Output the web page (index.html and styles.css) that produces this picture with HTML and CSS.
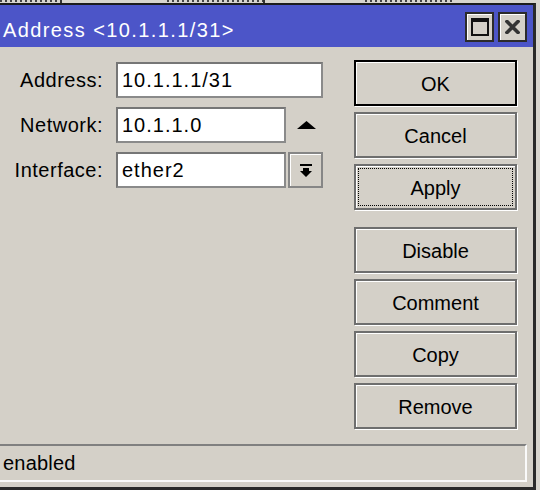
FILE: index.html
```html
<!DOCTYPE html>
<html>
<head>
<meta charset="utf-8">
<title>Address</title>
<link rel="stylesheet" href="styles.css">
</head>
<body>
<div class="backdrop">
  <span class="frag frag-a"></span><span class="sep"></span>
  <span class="frag frag-b"></span><span class="sep"></span>
  <span class="frag frag-c"></span>
</div>
<div class="window">
  <div class="titlebar">
    <span class="title">Address &lt;10.1.1.1/31&gt;</span>
    <div class="tb-buttons">
      <div class="tb-btn">
        <svg width="18" height="18" viewBox="0 0 18 18"><path d="M0 0H18V18H0Z M2 4V16H16V4Z" fill="#111" fill-rule="evenodd"/></svg>
      </div>
      <div class="tb-btn">
        <svg width="15" height="14" viewBox="0 0 15 14"><path d="M2 1.5L13 12.5M13 1.5L2 12.5" stroke="#333" stroke-width="3.6" stroke-linecap="square"/></svg>
      </div>
    </div>
  </div>
  <div class="content">
    <div class="form">
      <div class="lbl">Address:</div>
      <div class="field wide">10.1.1.1/31</div>
      <div class="lbl">Network:</div>
      <div class="field">10.1.1.0</div>
      <div class="extra">
        <svg width="19" height="8" viewBox="0 0 19 8"><path d="M9.5 0L19 8H0Z" fill="#000"/></svg>
      </div>
      <div class="lbl">Interface:</div>
      <div class="field">ether2</div>
      <div class="extra dd">
        <svg width="12" height="14" viewBox="0 0 12 14"><rect x="0" y="0" width="12" height="2" fill="#000"/><path d="M3 4H9V7H12L6 13L0 7H3Z" fill="#000"/></svg>
      </div>
    </div>
    <div class="actions">
      <div class="group">
        <div class="btn btn-default">OK</div>
        <div class="btn">Cancel</div>
        <div class="btn btn-focus">Apply</div>
      </div>
      <div class="group">
        <div class="btn">Disable</div>
        <div class="btn">Comment</div>
        <div class="btn">Copy</div>
        <div class="btn">Remove</div>
      </div>
    </div>
  </div>
  <div class="status">enabled</div>
</div>
</body>
</html>
```
FILE: styles.css
```css
html, body {
  margin: 0;
  padding: 0;
}
body {
  width: 540px;
  height: 490px;
  overflow: hidden;
  background: #d8d5ce;
  font-family: "Liberation Sans", Arial, sans-serif;
  font-size: 20px;
  color: #000;
}
.backdrop {
  height: 3px;
  display: flex;
  align-items: flex-start;
}
.frag {
  height: 2px;
  background: repeating-linear-gradient(90deg, #444 0 2px, transparent 2px 5px);
}
.frag-a { width: 60px; }
.frag-b { width: 96px; margin-left: 105px; }
.frag-c { width: 90px; margin-left: 100px; }
.sep {
  width: 2px;
  height: 3px;
  background: #333;
}
.window {
  width: 533px;
  height: 482px;
  border-top: 2px solid #1c1c1c;
  border-right: 3px solid #2a2a2a;
  border-bottom: 3px solid #2a2a2a;
  background: #d4d0c8;
  display: flex;
  flex-direction: column;
}
.titlebar {
  height: 42px;
  flex: none;
  background: #4c55c8;
  display: flex;
  align-items: flex-start;
  padding: 0 6px 0 3px;
}
.title {
  color: #fff;
  margin-top: 14px;
  line-height: 23px;
  letter-spacing: 1.4px;
  white-space: nowrap;
}
.tb-buttons {
  margin-left: auto;
  margin-top: 7px;
  display: flex;
  gap: 4px;
}
.tb-btn {
  width: 25px;
  height: 26px;
  border: 2px solid #2b2b2b;
  background: #d4d0c8;
  box-shadow: inset 1px 1px 0 #fff;
  display: flex;
  align-items: center;
  justify-content: center;
}
.content {
  flex: 1;
  display: flex;
}
.form {
  width: 323px;
  flex: none;
  padding-top: 15px;
  display: grid;
  grid-template-columns: 116px 172px 35px;
  grid-auto-rows: 36px;
  row-gap: 9px;
  align-content: start;
}
.lbl {
  text-align: right;
  padding-right: 13px;
  line-height: 36px;
  letter-spacing: 0.5px;
  white-space: nowrap;
}
.field {
  width: 170px;
  box-sizing: border-box;
  height: 36px;
  border: 2px solid #8a8a8a;
  border-top-color: #767676;
  border-left-color: #767676;
  background: #fff;
  padding-left: 4px;
  line-height: 32px;
  letter-spacing: 1px;
  white-space: nowrap;
}
.field.wide {
  width: 207px;
  grid-column: 2 / 4;
}
.extra {
  display: flex;
  align-items: center;
  justify-content: center;
  box-sizing: border-box;
  padding-left: 1px;
}
.extra.dd {
  border: 2px solid #868686;
  background: #d4d0c8;
  box-shadow: inset 1px 1px 0 #fff;
  padding-top: 2px;
}
.actions {
  margin-left: auto;
  margin-right: 16px;
  width: 163px;
  padding-top: 13px;
  display: flex;
  flex-direction: column;
  gap: 17px;
}
.group {
  display: flex;
  flex-direction: column;
  gap: 6px;
}
.btn {
  height: 46px;
  box-sizing: border-box;
  border: 2px solid #6e6e6e;
  background: #d4d0c8;
  box-shadow: 1px 1px 0 #fff, inset 1px 1px 0 #fff;
  display: flex;
  align-items: center;
  justify-content: center;
  line-height: 23px;
  padding-top: 2px;
}
.btn-default {
  border-color: #000;
}
.btn-focus {
  outline: 1px dotted #000;
  outline-offset: -5px;
}
.status {
  height: 38px;
  box-sizing: border-box;
  margin-right: 6px;
  margin-bottom: 5px;
  border-top: 2px solid #808080;
  border-right: 2px solid #fafafa;
  border-bottom: 2px solid #fafafa;
  padding-left: 3px;
  line-height: 34px;
  letter-spacing: 0.2px;
  white-space: nowrap;
}
```
